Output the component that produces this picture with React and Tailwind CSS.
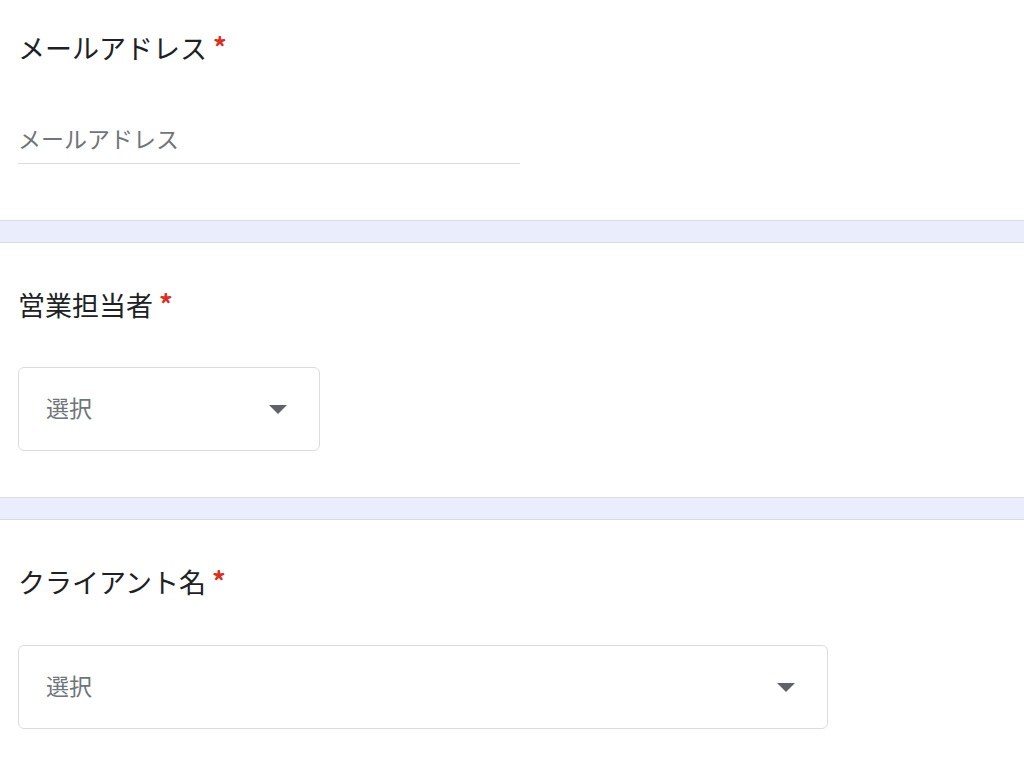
import React from "react";

const font = { fontFamily: '"Noto Sans CJK JP", "Noto Sans", sans-serif' };

const Label = ({ children }) => (
  <div className="h-[36px] leading-[36px] text-[27px] text-[#202124]">
    {children}
    <span className="ml-[6px] align-[1px] text-[27px] font-bold text-[#d93025]">*</span>
  </div>
);

const Divider = () => (
  <div className="h-[23px] border-y border-[#dadce0] bg-[#eaedfc]" />
);

const SelectBox = ({ width }) => (
  <div
    className={`flex h-[84px] items-center justify-between rounded-[6px] border border-[#dadce0] pl-[27px] pr-[32px] ${width}`}
  >
    <span className="mb-[3px] text-[23px] text-[#70757a]">選択</span>
    <svg width="18" height="9" viewBox="0 0 18 9">
      <path d="M0 0 L18 0 L9 9 Z" fill="#5f6368" />
    </svg>
  </div>
);

const App = () => {
  return (
    <div className="min-h-screen bg-white" style={font}>
      <div className="px-[18px] pt-[29px] pb-[56px]">
        <Label>メールアドレス</Label>
        <input
          placeholder="メールアドレス"
          className="mt-[51px] block h-[48px] w-[502px] border-b border-[#dadce0] pb-[4px] text-[23px] text-[#202124] outline-none placeholder:text-[#70757a]"
        />
      </div>
      <Divider />
      <div className="px-[18px] pt-[43px] pb-[46px]">
        <Label>営業担当者</Label>
        <div className="mt-[45px]">
          <SelectBox width="w-[302px]" />
        </div>
      </div>
      <Divider />
      <div className="px-[18px] pt-[43px] pb-[46px]">
        <Label>クライアント名</Label>
        <div className="mt-[46px]">
          <SelectBox width="w-[810px]" />
        </div>
      </div>
    </div>
  );
};

export default App;
